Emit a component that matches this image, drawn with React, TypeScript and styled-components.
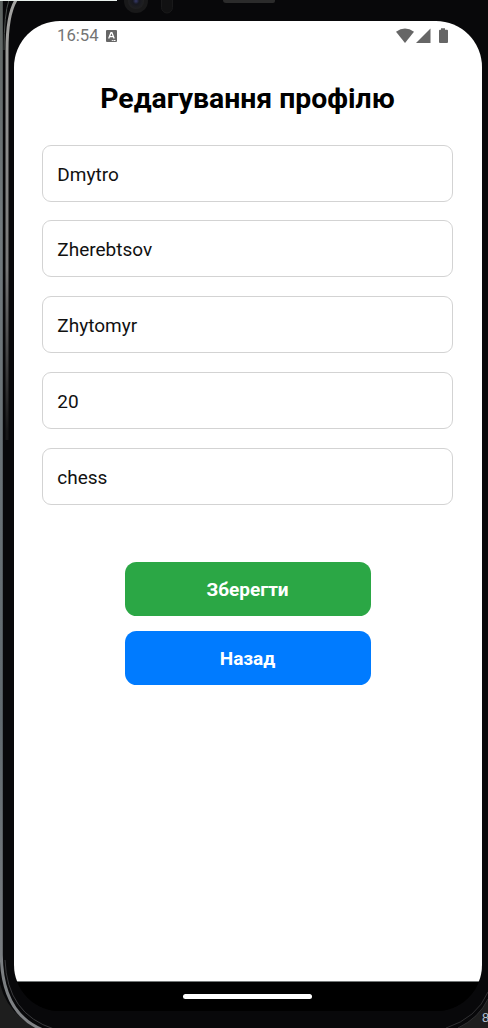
import React from "react";
import styled, { createGlobalStyle } from "styled-components";

const GlobalStyle = createGlobalStyle`
  * { box-sizing: border-box; }
  html, body { margin: 0; padding: 0; background: #1e1e1e; }
  body { font-family: Roboto, "Liberation Sans", sans-serif; overflow: hidden; }
`;

const Device = styled.div`
  position: relative;
  width: 488px;
  height: 1028px;
  padding: 21px 6px 17px 14px;
  overflow: hidden;
`;

const Frame = styled.svg`
  position: absolute;
  inset: 0;
`;

const Screen = styled.main`
  position: relative;
  display: flex;
  flex-direction: column;
  width: 468px;
  height: 990px;
  border-radius: 46px;
  overflow: hidden;
  background: #000;
`;

const StatusBar = styled.header`
  display: flex;
  align-items: center;
  justify-content: space-between;
  height: 29px;
  padding: 0 33px 0 43px;
  background: #fff;
  color: #747474;
`;

const StatusGroup = styled.div`
  display: flex;
  align-items: center;
  gap: 7px;
`;

const Clock = styled.span`
  font-size: 16.7px;
  line-height: 20px;
  padding-top: 1px;
`;

const Content = styled.section`
  flex: 1;
  display: flex;
  flex-direction: column;
  align-items: center;
  padding: 30px 29px 0 28px;
  background: #fff;
`;

const Title = styled.h1`
  margin: 0 0 26.6px;
  font-size: 28.4px;
  line-height: 38px;
  font-weight: 700;
  color: #000;
  white-space: nowrap;
`;

const Fields = styled.form`
  display: flex;
  flex-direction: column;
  gap: 18.8px;
  width: 411px;
`;

const Field = styled.input`
  width: 100%;
  height: 57px;
  padding: 2px 14px 0 14.3px;
  border: 1.4px solid #d3d3d3;
  border-radius: 9px;
  background: #fff;
  color: #111;
  font: 400 19px/24px Roboto, "Liberation Sans", sans-serif;
  outline: none;
`;

const Actions = styled.div`
  display: flex;
  flex-direction: column;
  gap: 14.6px;
  margin-top: 57.2px;
`;

const Button = styled.button<{ $color: string }>`
  width: 246px;
  height: 54px;
  padding: 2px 0 0;
  border: 0;
  border-radius: 11.5px;
  background: ${({ $color }) => $color};
  color: #fff;
  font: 700 19px/24px Roboto, "Liberation Sans", sans-serif;
`;

const NavBar = styled.footer`
  display: flex;
  justify-content: center;
  height: 30px;
  padding: 11.5px 1px 0 0;
  border-top: 1px solid #747878;
  background: #000;
`;

const Handle = styled.div`
  width: 129px;
  height: 5px;
  border-radius: 3px;
  background: #fff;
`;

const PhoneFrame = () => (
  <Frame width="488" height="1028" viewBox="0 0 488 1028" fill="none" aria-hidden="true">
    <defs>
      <linearGradient id="rim" x1="0" y1="0" x2="0" y2="1028" gradientUnits="userSpaceOnUse">
        <stop stopColor="#5d6361" />
        <stop offset=".22" stopColor="#71797d" />
        <stop offset=".7" stopColor="#626b70" />
        <stop offset="1" stopColor="#808285" />
      </linearGradient>
      <linearGradient id="innerRim" x1="0" y1="0" x2="0" y2="1028" gradientUnits="userSpaceOnUse">
        <stop stopColor="#a4a4a2" />
        <stop offset=".26" stopColor="#777" />
        <stop offset=".42" stopColor="#171718" />
        <stop offset="1" stopColor="#111114" />
      </linearGradient>
      <radialGradient id="lens">
        <stop stopColor="#363a69" />
        <stop offset=".4" stopColor="#171820" />
        <stop offset="1" stopColor="#202021" />
      </radialGradient>
    </defs>
    <path d="M0 0H488V999Q479 1018 458 1028H40Q8 1016 0 984Z" fill="#08080a" />
    <path d="M1.3 0V955Q2 1016 46 1031" stroke="url(#rim)" strokeWidth="3" />
    <path d="M5 960Q7 1014 54 1029" stroke="#3a3a3d" />
    <path d="M9 0Q4 14 4 50" stroke="#4b504e" />
    <path d="M16 0Q7 15 7 50V440" stroke="url(#innerRim)" strokeWidth="3" />
    <path d="M488 992Q477 1018 446 1028M488 999Q479 1018 458 1028" stroke="#303032" />
    <path d="M0 0H117V1H0Z" fill="#e8efec" />
    <circle cx="136" cy="1" r="12" fill="#19191a" />
    <circle cx="136" cy="1" r="8" fill="url(#lens)" />
    <rect x="161.5" y="-12" width="11" height="25" rx="5.5" fill="#111112" stroke="#19191a" />
    <path d="M223 0H275V1Q275 3 273 3H226Q223 3 223 0Z" fill="#2b2b2b" />
    <text x="482" y="1022" fill="#b7c4d4" fontFamily="Liberation Sans, sans-serif" fontSize="13">8</text>
  </Frame>
);

const KeyboardIcon = () => (
  <svg width="11" height="12" viewBox="0 0 11 12" aria-hidden="true">
    <rect width="11" height="12" rx="1" fill="#666" />
    <path d="M2.7 8.5 5 2.7h.9L8.2 8.500M3.7 6.6h3.500" fill="none" stroke="#fff" strokeWidth="1.3" />
    <path d="M5.8 10.5h1M7.5 10.5h2" stroke="#fff" />
  </svg>
);

const StatusIcons = () => (
  <svg width="53" height="16" viewBox="0 0 53 16" fill="#666" aria-hidden="true">
    <path d="M0 3.8Q9 -2.8 18 3.8L9 15Z" />
    <path d="M34.5 .5V15H20Z" />
    <path d="M45 .2h4v1.5h2q1 0 1 1V14q0 1-1 1h-7q-1 0-1-1V2.7q0-1 1-1h1Z" />
  </svg>
);

const profile = ["Dmytro", "Zherebtsov", "Zhytomyr", "20", "chess"];

export default function App() {
  return (
    <Device>
      <GlobalStyle />
      <PhoneFrame />
      <Screen>
        <StatusBar>
          <StatusGroup>
            <Clock>16:54</Clock>
            <KeyboardIcon />
          </StatusGroup>
          <StatusIcons />
        </StatusBar>
        <Content>
          <Title>Редагування профілю</Title>
          <Fields>
            {profile.map((value) => (
              <Field key={value} defaultValue={value} />
            ))}
          </Fields>
          <Actions>
            <Button $color="#2ba745">Зберегти</Button>
            <Button $color="#007bff">Назад</Button>
          </Actions>
        </Content>
        <NavBar>
          <Handle />
        </NavBar>
      </Screen>
    </Device>
  );
}
